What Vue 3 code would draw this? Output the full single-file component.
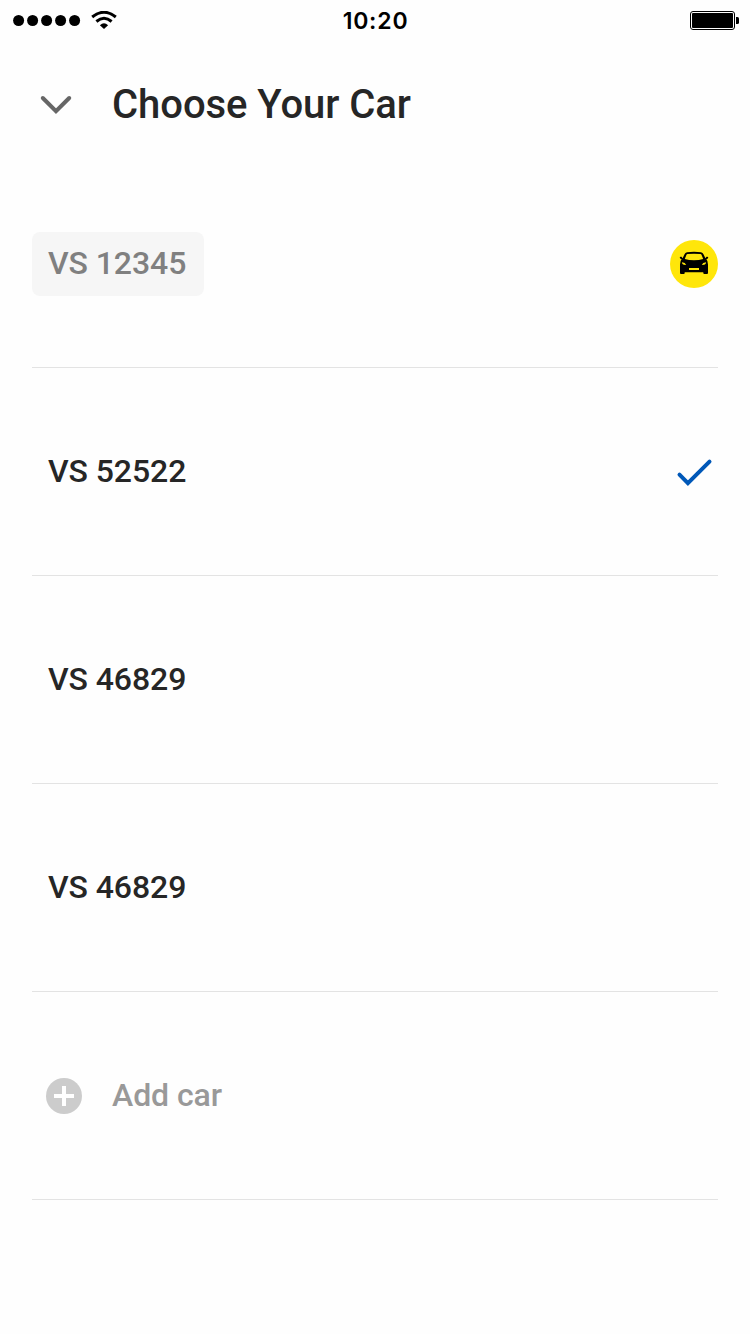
<script setup>
const cars = [
  { id: 1, plate: 'VS 12345', state: 'parked' },
  { id: 2, plate: 'VS 52522', state: 'selected' },
  { id: 3, plate: 'VS 46829', state: '' },
  { id: 4, plate: 'VS 46829', state: '' },
]
</script>

<template>
  <main class="screen">
    <header class="status">
      <div class="signal">
        <svg class="dots" width="68" height="12" viewBox="0 0 68 12">
          <circle v-for="n in 5" :key="n" :cx="5.6 + (n - 1) * 14" cy="5.5" r="5.5" />
        </svg>
        <svg class="wifi" width="26" height="19" viewBox="0 0 26 19">
          <path d="M1.2 6Q13-3.5 24.8 6" fill="none" stroke="#000" stroke-width="3" />
          <path d="M5.4 10.5Q13 4.1 20.6 10.5" fill="none" stroke="#000" stroke-width="3" />
          <path d="M8.9 14.2Q13 10.2 17.1 14.2L13 18Z" />
        </svg>
      </div>
      <time class="clock">10:20</time>
      <svg class="battery" width="50" height="20" viewBox="0 0 50 20">
        <rect x=".5" y=".5" width="44" height="18" rx="2.5" fill="#fff" stroke="#000" />
        <rect x="2" y="2" width="41" height="15" rx="1" />
        <path d="M46 6h1.5q1.5 0 1.5 1.5v4q0 1.5-1.5 1.5H46z" />
      </svg>
    </header>

    <div class="title-bar">
      <svg width="48" height="48" viewBox="0 0 48 48">
        <path d="M10.8 17 24 30.2 37.2 17" fill="none" stroke="#666" stroke-width="4" stroke-linecap="round" />
      </svg>
      <h1>Choose Your Car</h1>
    </div>

    <ul class="list">
      <li v-for="car in cars" :key="car.id" class="row">
        <span class="plate" :class="car.state">{{ car.plate }}</span>
        <svg v-if="car.state === 'parked'" width="48" height="48" viewBox="0 0 48 48">
          <circle cx="24" cy="24" r="24" fill="#ffe60a" />
          <path fill-rule="evenodd" d="M17 12.3Q24 11.4 31 12.3Q32.8 12.6 33.6 14.4L35.4 18.2L36.5 16.8Q38.4 16.3 38.2 17.8Q37.8 19 36.4 19.3Q38 21 38 24.5V33Q38 34 37 34H34.3Q33.3 34 33.3 33V32.2H14.7V33Q14.7 34 13.7 34H11Q10 34 10 33V24.5Q10 21 11.6 19.3Q10.2 19 9.8 17.8Q9.6 16.3 11.500 16.8L12.6 18.2L14.4 14.4Q15.2 12.6 17 12.3ZM17.6 14Q16.7 14.2 16.4 15L14.8 18.900Q19 20.300 24 20.300Q29 20.300 33.200 18.900L31.600 15Q31.300 14.200 30.400 14Q24 13.300 17.600 14ZM12 22.300Q11.900 24.500 13.800 24.700L16.200 24.900Q15.400 22.700 12 22.300ZM36 22.300Q32.600 22.700 31.800 24.900L34.200 24.700Q36.100 24.500 36 22.300ZM19 28V30H29V28Z" />
        </svg>
        <svg v-else-if="car.state === 'selected'" width="48" height="48" viewBox="0 0 48 48">
          <path d="M9.5 26.7 17.9 35.2 39.5 13.7" fill="none" stroke="#0058b8" stroke-width="4" stroke-linecap="round" />
        </svg>
      </li>
      <li class="row add">
        <svg width="36" height="36" viewBox="0 0 36 36">
          <circle cx="18" cy="18" r="18" fill="#ccc" />
          <path d="M8 18h20M18 8v20" stroke="#fff" stroke-width="4" />
        </svg>
        <span class="add-label">Add car</span>
      </li>
    </ul>
  </main>
</template>

<style>
body {
  background: #fefefe;
}
</style>

<style scoped>
.screen {
  box-sizing: border-box;
  width: 750px;
  height: 1334px;
  overflow: hidden;
  background: #fefefe;
  color: #262626;
  font-family: Roboto, "Liberation Sans", sans-serif;
  font-weight: 500;
}
.status {
  display: grid;
  grid-template-columns: 1fr auto 1fr;
  align-items: center;
  height: 40px;
  padding: 0 10px 0 13px;
}
.signal {
  display: flex;
  align-items: center;
  gap: 10px;
}
.clock {
  color: #000;
  font: 600 23px/40px Inter, sans-serif;
  letter-spacing: 0.8px;
  padding-top: 1px;
  margin-right: 2px;
}
.battery {
  justify-self: end;
}
.title-bar {
  display: flex;
  align-items: center;
  gap: 32px;
  height: 130px;
  margin-bottom: -10px;
  padding-left: 32px;
}
h1 {
  margin: 0;
  font-size: 40px;
  font-weight: 500;
  line-height: 48px;
  letter-spacing: -0.05px;
}
.list {
  margin: 0;
  padding: 0 32px;
  list-style: none;
}
.row {
  box-sizing: border-box;
  display: flex;
  align-items: center;
  justify-content: space-between;
  height: 208px;
  padding-top: 1px;
  border-bottom: 1px solid #e3e3e3;
}
.plate {
  box-sizing: border-box;
  height: 64px;
  padding: 0 16px;
  border-radius: 8px;
  font-size: 32px;
  line-height: 63px;
  letter-spacing: -0.08px;
}
.parked {
  width: 172px;
  background: #f6f6f6;
  color: #808080;
}
.add {
  justify-content: flex-start;
  gap: 30px;
  padding-left: 14px;
}
.add-label {
  padding-bottom: 2px;
  color: #999;
  font-size: 32px;
  line-height: 40px;
  letter-spacing: -0.08px;
}
</style>
